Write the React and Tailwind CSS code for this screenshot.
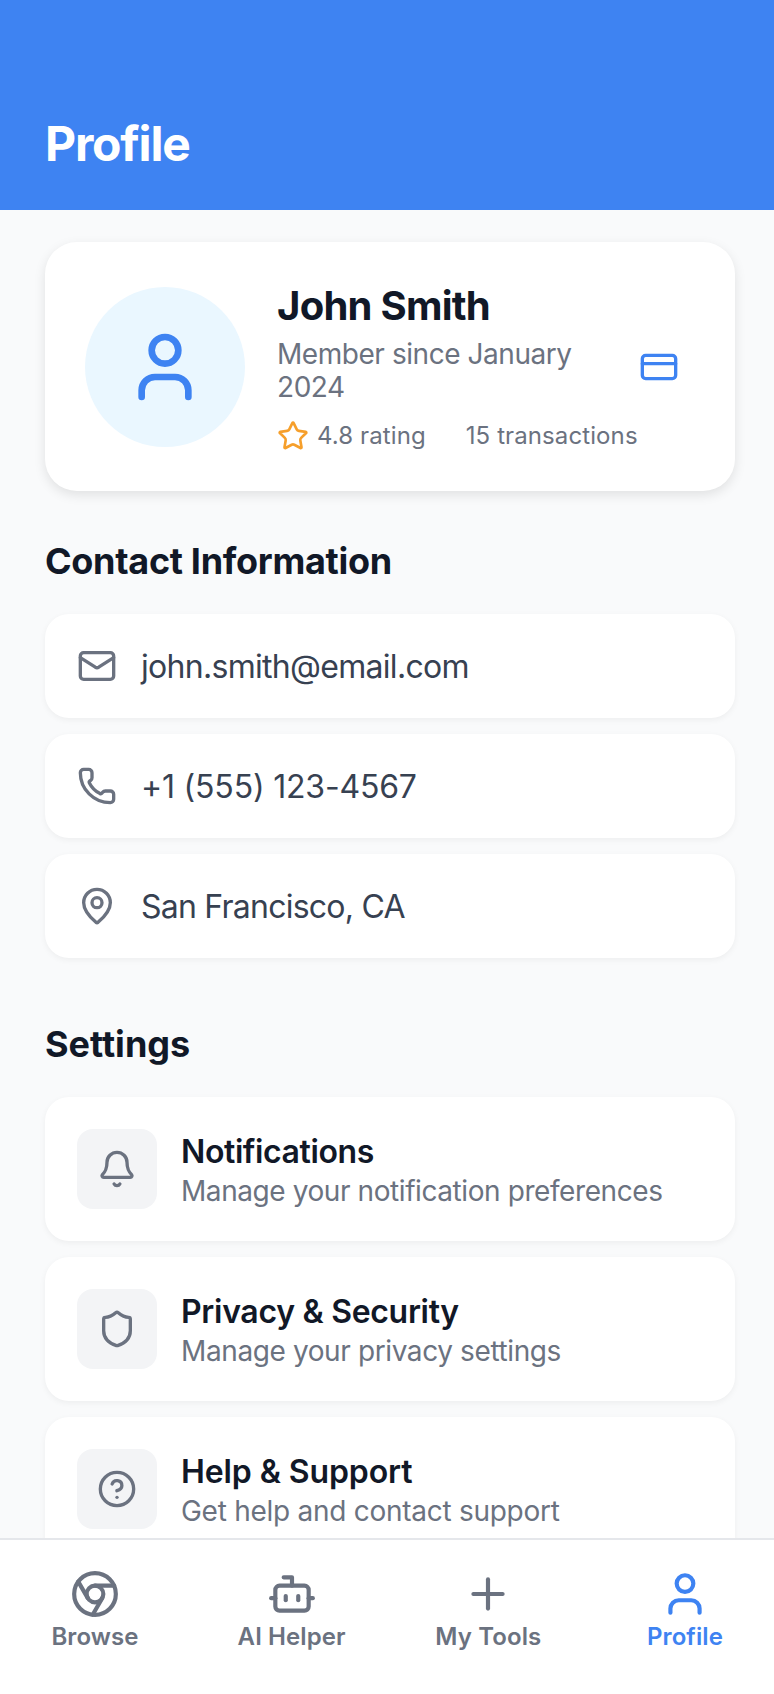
import React from "react";
import { User, CreditCard, Star, Mail, Phone, MapPin, Bell, Shield, CircleHelp, Chrome, Bot, Plus } from "lucide-react";

const contacts = [
  { Icon: Mail, text: "john.smith@email.com", track: "tracking-[-0.7px]" },
  { Icon: Phone, text: "+1 (555) 123-4567", track: "tracking-[-0.19px]" },
  { Icon: MapPin, text: "San Francisco, CA", track: "tracking-[-0.76px]" },
];
const settings = [
  { Icon: Bell, title: "Notifications", sub: "Manage your notification preferences", t1: "tracking-[-0.4px]", t2: "tracking-[-0.42px]" },
  { Icon: Shield, title: "Privacy & Security", sub: "Manage your privacy settings", t1: "tracking-[-0.3px]", t2: "tracking-[-0.39px]" },
  { Icon: CircleHelp, title: "Help & Support", sub: "Get help and contact support", t1: "tracking-[-0.1px]", t2: "tracking-[-0.27px]" },
];
const tabs = [
  { Icon: Chrome, label: "Browse" },
  { Icon: Bot, label: "AI Helper" },
  { Icon: Plus, label: "My Tools" },
  { Icon: User, label: "Profile", active: true },
];

export default function App() {
  return (
    <div className="flex h-[1694px] w-[774px] flex-col overflow-hidden bg-[#f9fafb] font-['Inter',sans-serif]">
      <header className="flex h-[210px] shrink-0 items-end bg-[#3e83f2] px-[45px] pb-[37px]">
        <h1 className="text-[48px] leading-[58px] font-bold tracking-[-1.2px] text-white">Profile</h1>
      </header>

      <main className="min-h-0 flex-1 overflow-hidden pt-[32px] pr-[39px] pl-[45px]">
        <section className="flex h-[249px] items-center rounded-[32px] bg-white pr-[56px] pl-[40px] shadow-[0_4px_12px_rgba(0,0,0,0.1)]">
          <div className="flex h-[160px] w-[160px] shrink-0 items-center justify-center rounded-full bg-[#eaf7ff]">
            <User size={80} strokeWidth={2} className="text-[#3e83f2]" />
          </div>
          <div className="ml-[32px] min-w-0 flex-1">
            <h2 className="text-[40px] leading-[48px] font-bold tracking-[-0.75px] text-[#111827]">John Smith</h2>
            <p className="mt-[8px] text-[28px] leading-[33px] tracking-[-0.45px] text-[#6b7280]">Member since January 2024</p>
            <div className="mt-[16px] flex items-center whitespace-nowrap text-[24px] leading-[29px] tracking-[0.1px] text-[#6b7280]">
              <Star size={32} strokeWidth={2} className="shrink-0 text-[#f69f2b]" />
              <span className="ml-[8px]">4.8 rating</span>
              <span className="ml-[40px]">15 transactions</span>
            </div>
          </div>
          <CreditCard size={40} strokeWidth={2} className="shrink-0 text-[#3e83f2]" />
        </section>

        <h3 className="mt-[48px] text-[36px] leading-[44px] font-bold tracking-[-0.3px] text-[#111827]">Contact Information</h3>
        <div className="mt-[31px] flex flex-col gap-[16px]">
          {contacts.map(({ Icon, text, track }) => (
            <div key={text} className="flex h-[104px] items-center gap-[24px] rounded-[24px] bg-white px-[32px] shadow-[0_2px_6px_rgba(0,0,0,0.05)]">
              <Icon size={40} strokeWidth={2} className="shrink-0 text-[#6b7280]" />
              <span className={`text-[32px] leading-[39px] text-[#374151] ${track}`}>{text}</span>
            </div>
          ))}
        </div>

        <h3 className="mt-[64px] text-[36px] leading-[44px] font-bold text-[#111827]">Settings</h3>
        <div className="mt-[31px] flex flex-col gap-[16px]">
          {settings.map(({ Icon, title, sub, t1, t2 }) => (
            <div key={title} className="flex h-[144px] shrink-0 items-center gap-[24px] rounded-[24px] bg-white px-[32px] shadow-[0_2px_6px_rgba(0,0,0,0.05)]">
              <div className="flex h-[80px] w-[80px] shrink-0 items-center justify-center rounded-[16px] bg-[#f3f4f6]">
                <Icon size={40} strokeWidth={2} className="text-[#6b7280]" />
              </div>
              <div className="pt-[2px]">
                <div className={`text-[32px] leading-[39px] font-semibold text-[#111827] ${t1}`}>{title}</div>
                <div className={`mt-[3px] text-[28px] leading-[34px] text-[#6b7280] ${t2}`}>{sub}</div>
              </div>
            </div>
          ))}
        </div>
      </main>

      <nav className="flex h-[156px] shrink-0 items-start justify-between border-t-2 border-[#e5e7eb] bg-white pt-[29px] pr-[29px] pl-[35px]">
        {tabs.map(({ Icon, label, active }) => (
          <div key={label} className={`flex w-[120px] flex-col items-center ${active ? "text-[#3e83f2]" : "text-[#6b7280]"}`}>
            <Icon size={50} strokeWidth={2} />
            <span className="mt-[3px] text-[24px] leading-[29px] font-semibold tracking-[0.1px]">{label}</span>
          </div>
        ))}
      </nav>
    </div>
  );
}
